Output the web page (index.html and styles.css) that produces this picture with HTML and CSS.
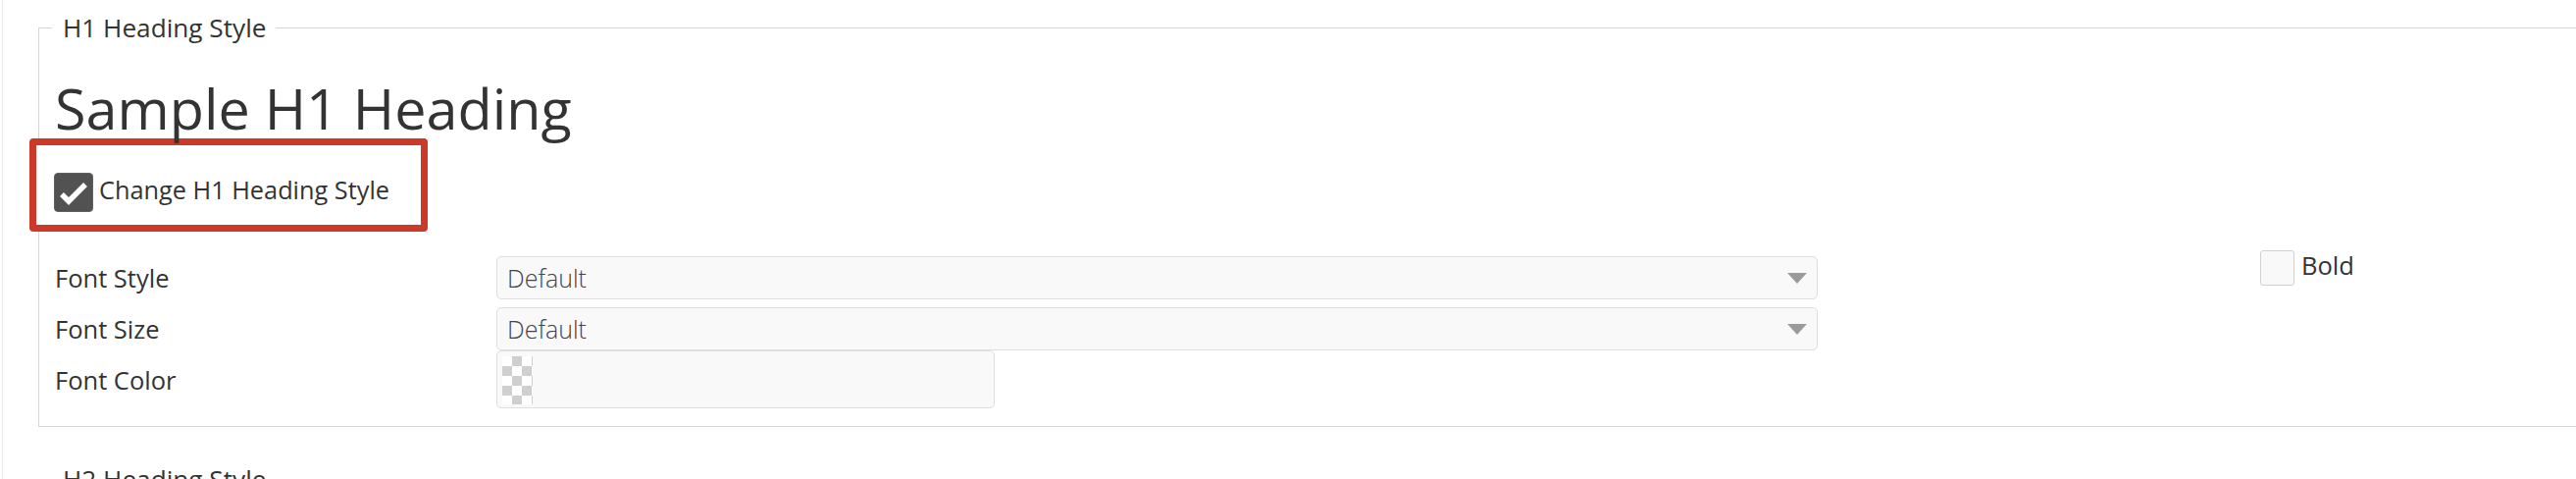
FILE: index.html
```html
<!DOCTYPE html>
<html lang="en">
<head>
    <meta charset="UTF-8">
    <meta name="viewport" content="width=device-width, initial-scale=1.0">
    <title>Heading Styles</title>
    <link rel="stylesheet" href="styles.css">
</head>
<body>
    <div class="page">
        <fieldset class="group">
            <legend>H1 Heading Style</legend>
            <div class="group-body">
                <h1 class="sample">Sample H1 Heading</h1>

                <label class="toggle highlight">
                    <span class="check is-on">
                        <svg viewBox="0 0 40 40" width="40" height="40"><polyline points="8,22 15,29 32,12" fill="none" stroke="#fff" stroke-width="5.5"/></svg>
                    </span>
                    <span class="toggle-text">Change H1 Heading Style</span>
                </label>

                <div class="options">
                    <div class="fields">
                        <div class="field">
                            <span class="field-label">Font Style</span>
                            <div class="select">Default<span class="caret"></span></div>
                        </div>
                        <div class="field tight">
                            <span class="field-label">Font Size</span>
                            <div class="select">Default<span class="caret"></span></div>
                        </div>
                        <div class="field">
                            <span class="field-label">Font Color</span>
                            <div class="color-box"><span class="swatch"></span></div>
                        </div>
                    </div>
                    <label class="toggle bold-toggle">
                        <span class="check small"></span>
                        <span class="toggle-text">Bold</span>
                    </label>
                </div>
            </div>
        </fieldset>

        <fieldset class="group next">
            <legend>H2 Heading Style</legend>
        </fieldset>
    </div>
</body>
</html>
```

FILE: styles.css
```css
html, body {
    margin: 0;
    background: #fff;
}
body {
    font-family: 'Open Sans', 'Noto Sans', sans-serif;
    color: #333;
    overflow: hidden;
}
.page {
    margin-left: 2px;
    border-left: 1px solid #ececec;
    min-height: 100vh;
    overflow: hidden;
}
.group {
    margin: 10px -40px 0 36px;
    padding: 0 0 18px 13px;
    border: 1px solid #d6d6d6;
}
.group legend {
    font-size: 26.2px;
    line-height: 36px;
    padding: 0 9px 0 11px;
}
.group.next {
    margin-top: 35px;
}
.group-body {
    padding-left: 3px;
}
.sample {
    margin: 33px 0 0;
    font-size: 57.5px;
    line-height: 62px;
    font-weight: 400;
}
.toggle {
    display: flex;
    align-items: flex-start;
    font-size: 25.3px;
}
.toggle-text {
    line-height: 34px;
}
.highlight {
    box-sizing: border-box;
    width: 406px;
    height: 95px;
    margin-left: -26px;
    padding: 28px 0 0 18px;
    gap: 6px;
    border: 7px solid #cb3a28;
    border-radius: 4px;
    background: #fff;
}
.check {
    box-sizing: border-box;
    width: 40px;
    height: 40px;
    border-radius: 4px;
    border: 1px solid #d0d0d0;
    background: #f9f9f9;
    flex: none;
}
.check.is-on {
    background: #525252;
    border-color: #606060;
}
.check svg {
    display: block;
    margin: -1px;
}
.check.small {
    width: 35px;
    height: 36px;
    border-radius: 3px;
}
.options {
    display: flex;
    align-items: flex-start;
    gap: 451px;
    margin-top: 19px;
}
.fields {
    padding-top: 6px;
}
.field {
    display: flex;
    align-items: center;
    margin-bottom: 8px;
}
.field.tight,
.field:last-child {
    margin-bottom: 0;
}
.field-label {
    width: 450px;
    font-size: 25.5px;
    line-height: 36px;
}
.select {
    box-sizing: border-box;
    position: relative;
    width: 1347px;
    height: 44px;
    padding-left: 10px;
    border: 1px solid #dedede;
    border-radius: 5px;
    background: #f9f9f9;
    color: #444;
    font-size: 25px;
    font-weight: 300;
    line-height: 42px;
}
.caret {
    position: absolute;
    right: 10px;
    top: 16px;
    border-left: 10px solid transparent;
    border-right: 10px solid transparent;
    border-top: 11px solid #9b9b9b;
}
.color-box {
    box-sizing: border-box;
    width: 508px;
    height: 59px;
    padding: 5px 0 0 5px;
    border: 1px solid #dedede;
    border-radius: 5px;
    background: #f9f9f9;
}
.swatch {
    display: block;
    width: 31px;
    height: 49px;
    background-color: #fff;
    background-image: conic-gradient(#cfcfcf 25%, #fff 0 50%, #cfcfcf 0 75%, #fff 0);
    background-size: 20px 20px;
    background-position: 0 0;
}
.bold-toggle {
    gap: 7px;
    font-size: 25.5px;
}
.bold-toggle .toggle-text {
    line-height: 30px;
}
```
